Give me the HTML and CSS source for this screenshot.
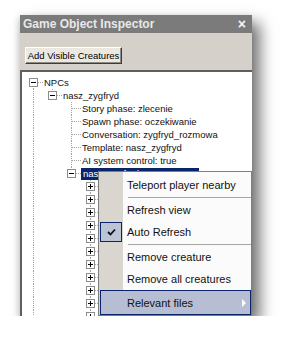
FILE: index.html
```html
<!DOCTYPE html>
<html lang="en">
<head>
    <meta charset="UTF-8">
    <title>Game Object Inspector</title>
    <link rel="stylesheet" href="styles.css">
</head>
<body>
    <div class="window">
        <div class="titlebar">
            <span class="title">Game Object Inspector</span>
            <span class="close">&times;</span>
        </div>
        <div class="toolbar">
            <button class="btn">Add Visible Creatures</button>
        </div>
        <div class="tree">
            <div class="row"><span class="c d"><i class="box minus"></i></span><span class="lbl">NPCs</span></div>
            <div class="row"><span class="c v"></span><span class="c l"><i class="box minus"></i></span><span class="lbl">nasz_zygfryd</span></div>
            <div class="row"><span class="c v"></span><span class="c"></span><span class="c t"></span><span class="lbl">Story phase: zlecenie</span></div>
            <div class="row"><span class="c v"></span><span class="c"></span><span class="c t"></span><span class="lbl">Spawn phase: oczekiwanie</span></div>
            <div class="row"><span class="c v"></span><span class="c"></span><span class="c t"></span><span class="lbl">Conversation: zygfryd_rozmowa</span></div>
            <div class="row"><span class="c v"></span><span class="c"></span><span class="c t"></span><span class="lbl">Template: nasz_zygfryd</span></div>
            <div class="row"><span class="c v"></span><span class="c"></span><span class="c t"></span><span class="lbl">AI system control: true</span></div>
            <div class="row"><span class="c v"></span><span class="c"></span><span class="c l"><i class="box minus"></i></span><span class="lbl sel">nasz_zygfryd</span></div>
            <div class="row"><span class="c v"></span><span class="c"></span><span class="c"></span><span class="c t"><i class="box plus"></i></span></div>
            <div class="row"><span class="c v"></span><span class="c"></span><span class="c"></span><span class="c t"><i class="box plus"></i></span></div>
            <div class="row"><span class="c v"></span><span class="c"></span><span class="c"></span><span class="c t"><i class="box plus"></i></span></div>
            <div class="row"><span class="c v"></span><span class="c"></span><span class="c"></span><span class="c t"><i class="box plus"></i></span></div>
            <div class="row"><span class="c v"></span><span class="c"></span><span class="c"></span><span class="c t"><i class="box plus"></i></span></div>
            <div class="row"><span class="c v"></span><span class="c"></span><span class="c"></span><span class="c t"><i class="box plus"></i></span></div>
            <div class="row"><span class="c v"></span><span class="c"></span><span class="c"></span><span class="c t"><i class="box plus"></i></span></div>
            <div class="row"><span class="c v"></span><span class="c"></span><span class="c"></span><span class="c t"><i class="box plus"></i></span></div>
            <div class="row"><span class="c v"></span><span class="c"></span><span class="c"></span><span class="c t"><i class="box plus"></i></span></div>
            <div class="row"><span class="c v"></span><span class="c"></span><span class="c"></span><span class="c t"><i class="box plus"></i></span></div>
            <div class="row"><span class="c v"></span><span class="c"></span><span class="c"></span><span class="c t"><i class="box plus"></i></span></div>
        </div>

        <div class="menu">
            <div class="item"><span class="ico"></span><span class="text">Teleport player nearby</span></div>
            <div class="sep"></div>
            <div class="item"><span class="ico"></span><span class="text">Refresh view</span></div>
            <div class="item"><span class="ico checked">
                <svg width="9" height="8" viewBox="0 0 9 8"><path d="M1 4 L3.5 6.5 L8 1.5" fill="none" stroke="#111" stroke-width="1.8"/></svg>
            </span><span class="text">Auto Refresh</span></div>
            <div class="sep"></div>
            <div class="item"><span class="ico"></span><span class="text">Remove creature</span></div>
            <div class="item"><span class="ico"></span><span class="text">Remove all creatures</span></div>
            <div class="item hot"><span class="ico"></span><span class="text">Relevant files</span><span class="arrow"></span></div>
        </div>
    </div>
</body>
</html>
```

FILE: styles.css
```css
body {
    margin: 0;
    background: #fff;
    font-family: "Liberation Sans", Arial, sans-serif;
}
.window {
    position: relative;
    margin: 15px 0 0 20px;
    width: 232px;
    height: 301px;
    background: #d5d1ca;
    display: flex;
    flex-direction: column;
    box-shadow: 8px 8px 14px rgba(0, 0, 0, 0.55), -2px 2px 6px rgba(0, 0, 0, 0.15);
}
.titlebar {
    height: 18px;
    background: #7b7b7b;
    color: #e8e8e8;
    display: flex;
    align-items: center;
    padding: 0 6px 0 3px;
}
.title {
    font-weight: bold;
    font-size: 12px;
    flex: 1;
}
.close {
    font-weight: bold;
    font-size: 14px;
    color: #f4f4f4;
}
.toolbar {
    height: 37px;
    box-sizing: border-box;
    padding: 14px 0 0 5px;
}
.btn {
    display: block;
    height: 17px;
    width: 97px;
    padding: 0;
    font-family: inherit;
    font-size: 9.5px;
    color: #000;
    background: #ebe8e2;
    border: 1px solid;
    border-color: #fff #3c3c3c #3c3c3c #fff;
    box-shadow: inset -1px -1px 0 #8e8b85;
}
.tree {
    flex: 1;
    background: #fff;
    border-top: 2px solid #5f5f5f;
    border-left: 2px solid #5f5f5f;
    padding: 4px 0 0 2px;
    overflow: hidden;
    font-size: 9.5px;
}
.row {
    display: flex;
    height: 13px;
    align-items: center;
}
.c {
    position: relative;
    flex: none;
    width: 19px;
    height: 13px;
}
.c.v::before,
.c.t::before,
.c.l::before,
.c.d::before {
    content: "";
    position: absolute;
    left: 9px;
    top: 0;
    bottom: 0;
    border-left: 1px dotted #a3a3a3;
}
.c.l::before {
    bottom: 6px;
}
.c.d::before {
    top: 6px;
}
.c.t::after,
.c.l::after,
.c.d::after {
    content: "";
    position: absolute;
    left: 10px;
    right: 0;
    top: 6px;
    border-top: 1px dotted #a3a3a3;
}
.box {
    position: absolute;
    z-index: 1;
    left: 5px;
    top: 2px;
    width: 9px;
    height: 9px;
    box-sizing: border-box;
    border: 1px solid #8c8c8c;
    background: #fff;
}
.box::before {
    content: "";
    position: absolute;
    left: 1px;
    top: 3px;
    width: 5px;
    height: 1px;
    background: #000;
}
.box.plus::after {
    content: "";
    position: absolute;
    left: 3px;
    top: 1px;
    width: 1px;
    height: 5px;
    background: #000;
}
.lbl {
    padding-left: 1px;
    white-space: nowrap;
    line-height: 13px;
    color: #111;
}
.lbl.sel {
    align-self: flex-end;
    line-height: 12px;
    background: #0a246a;
    color: #fff;
    width: 116px;
    padding-left: 2px;
}
.menu {
    position: absolute;
    left: 78px;
    top: 156px;
    right: 0;
    bottom: 0;
    border: 1px solid #7d7d7d;
    padding-top: 2px;
    background: linear-gradient(to right, #d9d6d0 0 24px, #fbfbfb 24px);
    display: flex;
    flex-direction: column;
    font-size: 11px;
    color: #111;
}
.item {
    display: flex;
    align-items: center;
    height: 22px;
    margin-left: 1px;
    flex: none;
}
.ico {
    width: 22px;
    height: 20px;
    box-sizing: border-box;
    display: flex;
    align-items: center;
    justify-content: center;
    flex: none;
}
.ico.checked {
    border: 1px solid #0a246a;
    background: #bcc4d8;
}
.text {
    padding-left: 5px;
    white-space: nowrap;
}
.sep {
    height: 1px;
    margin: 1px 0 1px 29px;
    background: #a6a6a6;
}
.item.hot {
    flex: 1;
    background: #b7bed3;
    box-shadow: inset 0 0 0 1px #0a246a;
}
.arrow {
    margin-left: auto;
    margin-right: 5px;
    width: 0;
    height: 0;
    border-left: 4px solid #fff;
    border-top: 4px solid transparent;
    border-bottom: 4px solid transparent;
}
```
